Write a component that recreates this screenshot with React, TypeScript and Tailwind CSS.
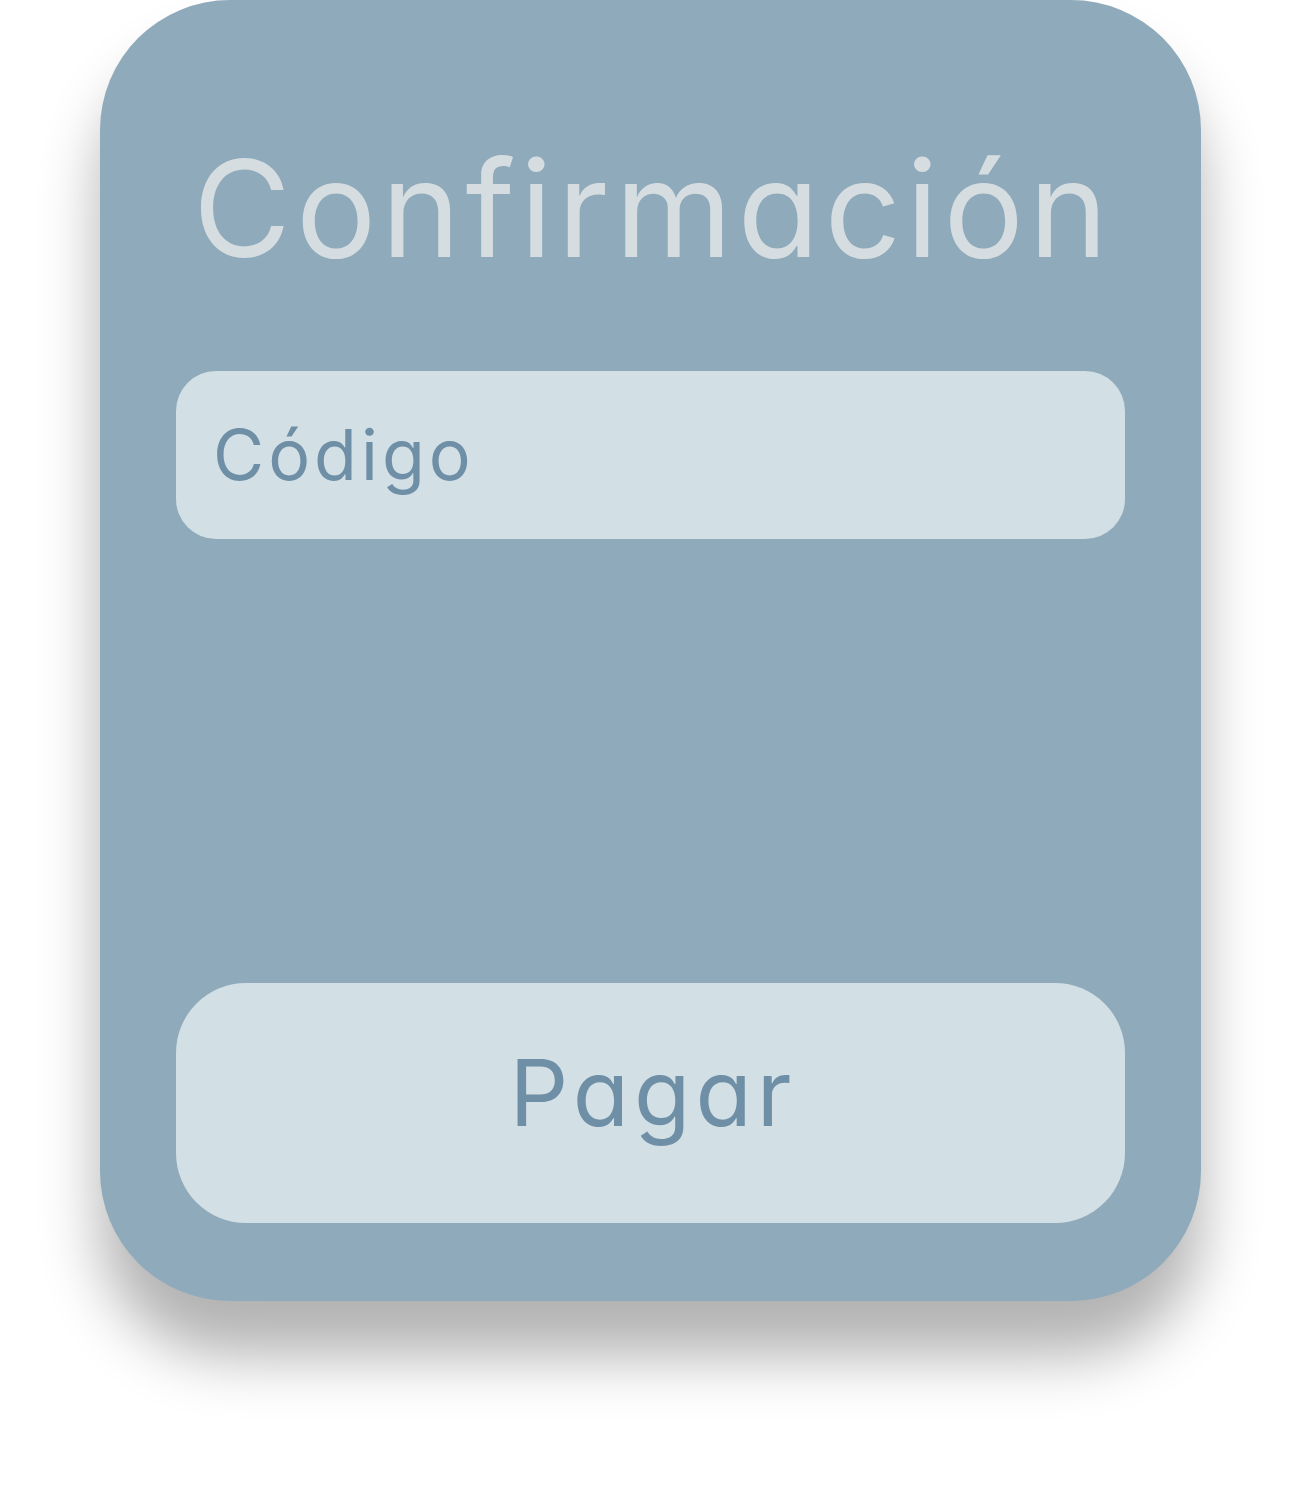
export default function App() {
    return (
        <div className="w-full min-h-[1501px] bg-white [font-feature-settings:'cv11'_1]" style={{ fontFamily: '"Inter", "Noto Sans", sans-serif' }}>
            <div className="ml-[100px] w-[1101px] h-[1301px] rounded-[130px] bg-[#8faabb] shadow-[0_55px_60px_rgba(0,0,0,0.3)] flex flex-col px-[76px] pb-[78px]">
                {/* titulo */}
                <h1 className="mt-[141px] pl-[5px] text-center text-[134px] leading-none font-normal text-[#d6dde1] tracking-[5px]">Confirmación</h1>

                {/* campo codigo */}
                <div className="mt-[96px] h-[168px] rounded-[40px] bg-[#d2dfe5] flex items-center px-[37px]">
                    <span className="text-[70px] leading-none text-[#6e8fa6] tracking-[4px]">Código</span>
                </div>

                <div className="flex-1" />

                {/* boton pagar */}
                <button className="h-[240px] rounded-[70px] bg-[#d2dfe5] flex items-center justify-center">
                    <span className="mb-[20px] pl-[5px] text-[92px] leading-none text-[#6e8fa6] tracking-[5px]">Pagar</span>
                </button>
            </div>
        </div>
    );
}
